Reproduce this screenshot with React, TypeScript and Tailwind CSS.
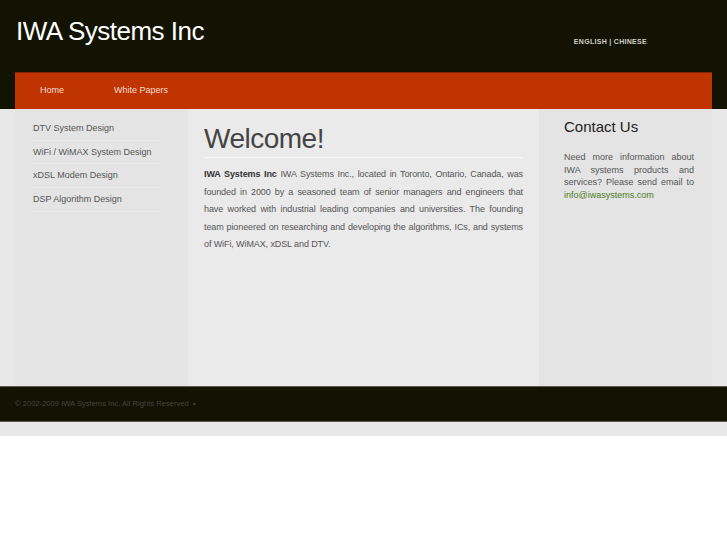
export default function App() {
  const services = [
    "DTV System Design",
    "WiFi / WiMAX System Design",
    "xDSL Modem Design",
    "DSP Algorithm Design",
  ];

  return (
    <div className="min-h-[545px] bg-white font-['Liberation_Sans',Arial,sans-serif]">
      <div className="bg-[#e8e8e8] pb-[14px]">
        {/* header */}
        <div className="bg-[#131304]">
          <div className="flex h-[72px] items-start justify-between">
            <h1 className="ml-[16px] mt-[16px] text-[26px] leading-[30px] tracking-[-0.5px] text-white">
              IWA Systems Inc
            </h1>
            <div className="mr-[80px] mt-[37px] text-[7px] font-bold tracking-[0.3px] text-[#cfcfc8]">
              ENGLISH | CHINESE
            </div>
          </div>
          <div className="mx-[15px] flex h-[37px] items-center border-t border-[#8a2400] bg-[#c03402] text-[9px] text-[#f3dccf]">
            <span className="ml-[25px]">Home</span>
            <span className="ml-[50px]">White Papers</span>
          </div>
        </div>

        {/* body */}
        <div className="mx-[15px] flex h-[277px]">
          <div className="w-[173px] bg-[#e4e4e4] pl-[18px] pr-[28px] pt-[8px]">
            {services.map((s) => (
              <div
                key={s}
                className="border-b border-[#ececec] py-[6px] text-[9px] leading-[10.7px] text-[#555]"
              >
                {s}
              </div>
            ))}
          </div>
          <div className="w-[351px] bg-[#eaeaea] px-[16px] pt-[15px]">
            <h2 className="border-b border-[#f6f6f6] pb-[3px] text-[28px] leading-[30px] tracking-[-0.5px] text-[#444]">
              Welcome!
            </h2>
            <p className="mt-[8px] text-justify text-[9px] leading-[17.5px] tracking-[-0.1px] text-[#555]">
              <b className="text-[#333]">IWA Systems Inc</b> IWA Systems Inc., located in
              Toronto, Ontario, Canada, was founded in 2000 by a seasoned team of senior
              managers and engineers that have worked with industrial leading companies
              and universities. The founding team pioneered on researching and developing
              the algorithms, ICs, and systems of WiFi, WiMAX, xDSL and DTV.
            </p>
          </div>
          <div className="flex-1 bg-[#e4e4e4] pl-[25px] pr-[18px] pt-[9px]">
            <h3 className="text-[15px] leading-[18px] text-[#222]">Contact Us</h3>
            <p className="mt-[15px] text-justify text-[9px] leading-[12.5px] text-[#555]">
              Need more information about IWA systems products and services? Please send
              email to <span className="text-[#4d7a22]">info@iwasystems.com</span>
            </p>
          </div>
        </div>

        {/* footer */}
        <div className="flex h-[36px] items-center border-y border-[#5c5c4c] bg-[#131304] pl-[15px] text-[7.6px] text-[#44443a]">
          © 2002-2009 IWA Systems Inc. All Rights Reserved &nbsp;•
        </div>
      </div>
    </div>
  );
}
